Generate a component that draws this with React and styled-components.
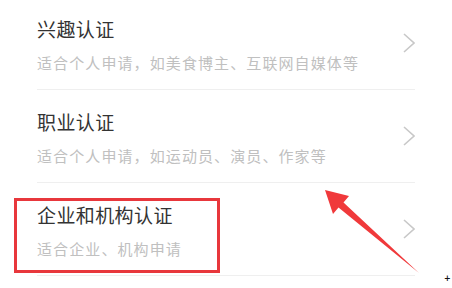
import React from "react";
import styled, { createGlobalStyle } from "styled-components";

const Global = createGlobalStyle`
  html, body { margin: 0; padding: 0; background: #fff; }
  body { font-family: "Noto Sans CJK SC", "Noto Sans", sans-serif; }
`;

const Page = styled.div`
  position: relative;
  width: 452px;
  height: 288px;
  overflow: hidden;
  background: #fff;
  display: flex;
  flex-direction: column;
`;

const List = styled.div`
  margin-top: -3px;
  padding: 0 37px;
  display: flex;
  flex-direction: column;
`;

const Row = styled.div`
  height: 93px;
  box-sizing: border-box;
  border-bottom: 1px solid #efefef;
  display: flex;
  align-items: center;
  justify-content: space-between;
`;

const Texts = styled.div`
  padding-top: 4px;
  display: flex;
  flex-direction: column;
`;

const Title = styled.div`
  font-size: 19px;
  line-height: 24px;
  letter-spacing: 0.4px;
  color: #333;
`;

const Sub = styled.div`
  margin-top: 12px;
  font-size: 15px;
  line-height: 20px;
  letter-spacing: 1.1px;
  color: #c0c0c0;
`;

const Chevron = styled.svg`
  width: 12px;
  height: 20px;
  flex: none;
`;

const Highlight = styled.div`
  position: absolute;
  left: 14px;
  top: 198px;
  width: 206px;
  height: 75px;
  box-sizing: border-box;
  border: 3px solid #e8373c;
`;

const Arrow = styled.svg`
  position: absolute;
  left: 0;
  top: 0;
  width: 452px;
  height: 288px;
  pointer-events: none;
`;

const Mark = styled.div`
  position: absolute;
  left: 444px;
  top: 275px;
  font-size: 8px;
  line-height: 8px;
  font-family: "DejaVu Sans", sans-serif;
  font-weight: bold;
  color: #111;
`;

const items = [
  { title: "兴趣认证", sub: "适合个人申请，如美食博主、互联网自媒体等" },
  { title: "职业认证", sub: "适合个人申请，如运动员、演员、作家等" },
  { title: "企业和机构认证", sub: "适合企业、机构申请" },
];

export default function App() {
  return (
    <Page>
      <Global />
      <List>
        {items.map((it) => (
          <Row key={it.title}>
            <Texts>
              <Title>{it.title}</Title>
              <Sub>{it.sub}</Sub>
            </Texts>
            <Chevron viewBox="0 0 12 20">
              <path d="M1 1 L11 10 L1 19" fill="none" stroke="#c8c8c8" strokeWidth="1.6" />
            </Chevron>
          </Row>
        ))}
      </List>
      <Highlight />
      <Arrow viewBox="0 0 452 288">
        <polygon
          points="325,190 349,196 343.5,202.5 419,273 338.5,207.5 333,214"
          fill="#f0393b"
        />
      </Arrow>
      <Mark>+</Mark>
    </Page>
  );
}
